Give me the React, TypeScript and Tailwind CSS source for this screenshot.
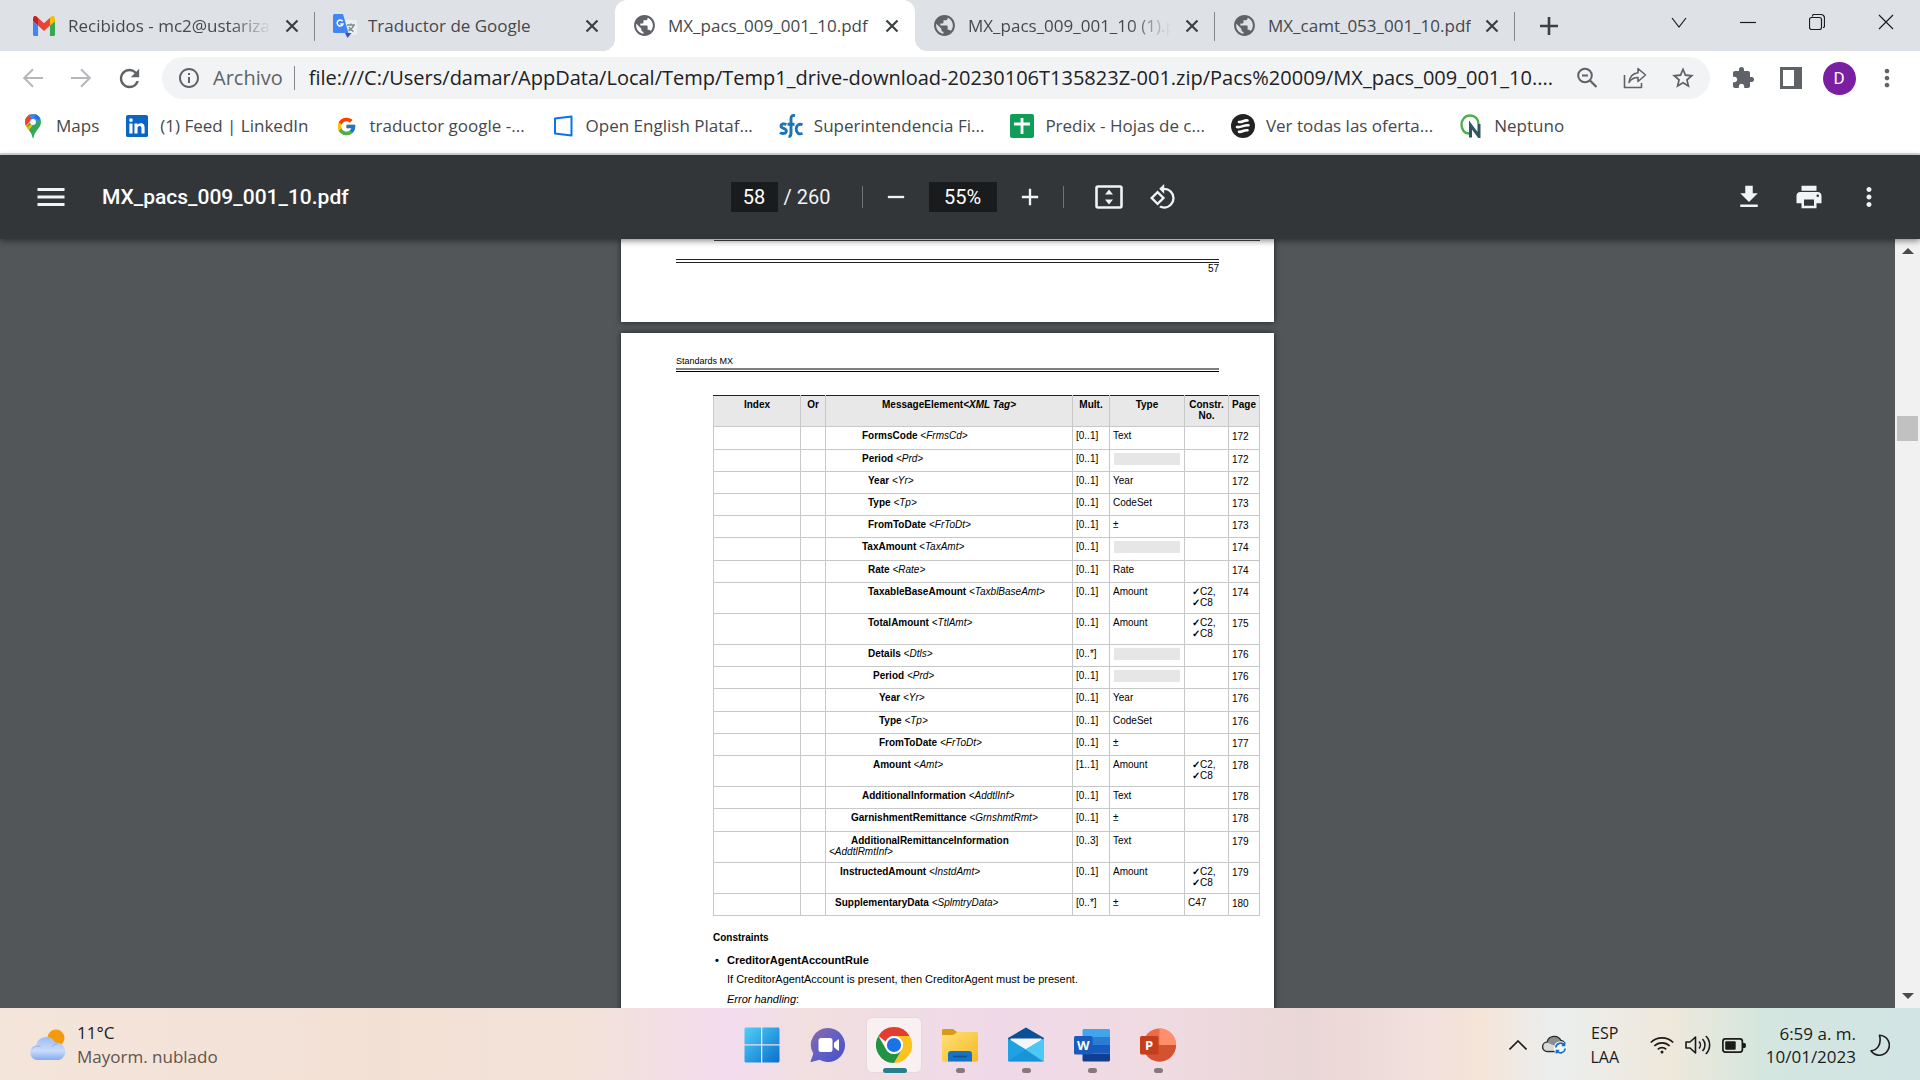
import React from 'react';
import {
  MdAdd,
  MdExtension,
  MdMenu,
  MdMoreVert,
  MdPrint,
  MdPublic,
  MdRemove,
  MdRotate90DegreesCcw,
  MdRefresh,
  MdStarBorder,
  MdInfoOutline,
} from 'react-icons/md';
import { FcGoogle } from 'react-icons/fc';

/* ---------- favicons ---------- */

const GmailIcon = () => (
  <svg viewBox="0 0 24 18" className="h-5 w-[22px]" preserveAspectRatio="none">
    <path fill="#4285f4" d="M1.6 18H5.5V8.6L0 4.5v11.9C0 17.3.7 18 1.6 18z" />
    <path fill="#34a853" d="M18.5 18h3.9c.9 0 1.6-.7 1.6-1.6V4.5l-5.5 4.1z" />
    <path fill="#fbbc04" d="M18.5 1.6v7L24 4.5V2.4c0-2-2.3-3.200-3.900-2z" />
    <path fill="#ea4335" d="M5.5 8.600v-7L12 6.500l6.500-4.900v7L12 13.500z" />
    <path fill="#c5221f" d="M0 2.400v2.100l5.500 4.100v-7L3.900.4C2.300-.8 0 .4 0 2.400z" />
  </svg>
);

const TranslateIcon = () => (
  <svg viewBox="0 0 24 24" className="h-6 w-6">
    <path fill="#eceff1" d="M9 6h13.500c.8 0 1.500.7 1.500 1.500v12c0 .8-.7 1.500-1.500 1.500H14z" />
    <path fill="none" stroke="#7d8a92" strokeWidth="1.400" d="M14 11h8M18 9.500V11M20.500 11c-.5 2.500-2.500 4.500-5 5.500M16 13c1 2 2.500 3.500 4.500 4.500" />
    <path fill="#3f51b5" d="M12 19l2.500 5 4-5z" />
    <path fill="#4285f4" d="M1.500 0H10l5.500 19h-14C.7 19 0 18.300 0 17.500v-16C0 .7.7 0 1.500 0z" />
    <path fill="none" stroke="#fff" strokeWidth="1.500" d="M9.600 7.300A3 3 0 1 0 10 10H7.300" />
  </svg>
);

const GlobeIcon = () => <MdPublic className="h-[25px] w-[25px] -ml-px text-[#5f6368]" />;

const MapsIcon = () => (
  <svg viewBox="0 0 16 24" className="h-6 w-4">
    <clipPath id="pin">
      <path d="M8 0a8 8 0 0 0-8 8c0 3 1.500 5 3.500 7.600C5.500 18.500 7 20.500 7.300 23c.1.700.3 1 .7 1s.6-.3.7-1c.3-2.500 1.800-4.500 3.800-7.400C14.500 13 16 11 16 8a8 8 0 0 0-8-8z" />
    </clipPath>
    <g clipPath="url(#pin)">
      <path fill="#34a853" d="M0 0h16v24H0z" />
      <path fill="#fbbc04" d="M-1 15.500L13 0H0v18l3.500-1.500L12 6z" />
      <path fill="#4285f4" d="M3 0h13v4L8 12 4 5z" />
      <path fill="#1a73e8" d="M11 0l5 4-3 2-4-3z" />
      <path fill="#ea4335" d="M-1 10V0h4.500L6.500 5.500 1 11.500z" />
    </g>
    <circle cx="8" cy="8" r="2.900" fill="#fff" />
  </svg>
);

const LinkedInIcon = () => (
  <svg viewBox="0 0 24 24" className="h-[22px] w-[22px]">
    <rect width="24" height="24" rx="2" fill="#0a66c2" />
    <circle cx="5.400" cy="5.500" r="2" fill="#fff" />
    <path fill="#fff" d="M3.700 9.200h3.400v11H3.700zM9.200 9.200h3.300v1.500c.6-1 1.800-1.800 3.500-1.800 3.400 0 4.300 2.200 4.300 5.200v6.100h-3.400v-5.400c0-1.600-.3-2.900-2-2.900s-2.300 1.200-2.300 2.800v5.500H9.200z" />
  </svg>
);

const OpenIcon = () => (
  <svg viewBox="0 0 20 22" className="h-[22px] w-5">
    <path fill="none" stroke="#0b72ee" strokeWidth="2" strokeLinejoin="round" d="M2 3.500L18.500 1.500v19L2 18.500z" />
  </svg>
);

const SfcIcon = () => (
  <svg viewBox="0 0 24 24" className="h-6 w-6">
    <g fill="none" stroke="#1b75b5" strokeWidth="2.900">
      <path d="M7.300 10.700C5.500 9.400 2 9.600 2 12c0 3 5.300 1.800 5.300 5 0 2.800-4.300 3.200-6.300 1.500" />
      <path d="M16 1.600c-2.800-.6-4 .4-4 3.400v14c0 2.500-.8 3.600-2.500 3.600M8.500 10.300h7" />
      <path d="M23.500 10.800c-3.500-1.600-6.300.3-6.300 4.200s2.800 6 6.300 4.200" />
    </g>
  </svg>
);

const SheetsIcon = () => (
  <svg viewBox="0 0 24 24" className="h-6 w-6">
    <rect width="24" height="24" rx="2" fill="#0f9d58" />
    <path fill="#fff" d="M10.600 4h2.800v4.600H20v2.800h-6.600V20h-2.800v-8.600H4V8.600h6.600z" />
  </svg>
);

const OfferIcon = () => (
  <svg viewBox="0 0 24 24" className="h-6 w-6">
    <circle cx="12" cy="12" r="12" fill="#232323" />
    <path fill="none" stroke="#fff" strokeWidth="2.600" strokeLinecap="round" d="M8 8c3.500.6 5-2.200 8.500-1.500M6 13c4.500.8 7-2.500 11.500-1.700M8 17.800c3.500.5 5-2.200 8.500-1.500" />
  </svg>
);

const NeptunoIcon = () => (
  <svg viewBox="0 0 24 24" className="h-6 w-6">
    <path fill="none" stroke="#4caf50" strokeWidth="2.400" d="M10 19.500C5 19.500 2.500 15 2.500 10.500S6 1.500 11 1.500s8.500 3.500 8.500 8.500" />
    <path fill="none" stroke="#2f5763" strokeWidth="3" d="M11.500 23.500V11l8.500 11.500V10" />
  </svg>
);

/* ---------- toolbar icons ---------- */

const Arrow = ({ flip }: { flip?: boolean }) => (
  <svg viewBox="0 0 22 20" className={flip ? 'h-5 w-[22px] -scale-x-100' : 'h-5 w-[22px]'}>
    <path fill="none" stroke="#b4b7bb" strokeWidth="2" d="M21 10H2.500M11 1.200L2.200 10l8.800 8.800" />
  </svg>
);

const ZoomOutIcon = () => (
  <svg viewBox="0 0 24 24" className="h-6 w-6" fill="none" stroke="#5f6368" strokeWidth="2">
    <circle cx="10" cy="9.500" r="6.800" />
    <path d="M15 14.500l6.500 6.500M7 9.500h6" strokeWidth="2.200" />
  </svg>
);

const ShareIcon = () => (
  <svg viewBox="0 0 24 24" className="h-6 w-6" fill="none" stroke="#5f6368" strokeWidth="1.600" strokeLinejoin="round">
    <path d="M1.500 9v12.500h17V17" />
    <path d="M15 2.500l7.500 6.500-7.500 6.500v-4c-4 0-7 1.500-9 5 .5-5 3.500-9 9-9.700z" />
  </svg>
);

const DownloadIcon = () => (
  <svg viewBox="0 0 24 24" className="h-[30px] w-[30px]" fill="#f1f3f4">
    <path d="M19 9h-4V3H9v6H5l7 7 7-7zM5 18v2h14v-2H5z" />
  </svg>
);

const FitIcon = () => (
  <svg viewBox="0 0 28 24" className="h-6 w-7">
    <rect x="1.500" y="1.500" width="25" height="21" rx="1.500" fill="none" stroke="#f1f3f4" strokeWidth="2.600" />
    <path fill="#f1f3f4" d="M14 4.500l4 5h-8zM14 19.500l4-5h-8z" />
  </svg>
);

/* ---------- taskbar icons ---------- */

const WindowsIcon = () => (
  <svg viewBox="0 0 36 36" className="h-9 w-9">
    <defs>
      <linearGradient id="win" x1="0" y1="0" x2="1" y2="1" gradientUnits="objectBoundingBox">
        <stop offset="0" stopColor="#4fd0f8" />
        <stop offset="1" stopColor="#0a6fcb" />
      </linearGradient>
    </defs>
    <path fill="url(#win)" d="M2 .5h15v16.800H.5V2C.5 1.200 1.200.5 2 .5zM18.300.5H34c.8 0 1.500.7 1.500 1.500v15.300H18.300zM.5 18.600H17v16.900H2c-.8 0-1.500-.7-1.500-1.500zM18.300 18.600h17.200V34c0 .8-.7 1.500-1.500 1.500H18.300z" />
  </svg>
);

const ChatIcon = () => (
  <svg viewBox="0 0 36 36" className="h-9 w-9">
    <defs>
      <linearGradient id="chat" x1="0" y1="0" x2="1" y2="1">
        <stop offset="0" stopColor="#8c6aa8" />
        <stop offset=".6" stopColor="#5a5cc9" />
        <stop offset="1" stopColor="#4a4fc0" />
      </linearGradient>
    </defs>
    <path fill="url(#chat)" d="M18 1a17 17 0 1 1-8.500 31.700L1.500 35c-.6.100-1-.3-.8-.9l2.600-7.400A17 17 0 0 1 18 1z" />
    <rect x="8.500" y="11" width="14" height="14" rx="2.500" fill="#fff" />
    <path fill="#fff" d="M24 15.800l4-3.300c.6-.4 1 0 1 .5v10c0 .6-.5.900-1 .5l-4-3.300z" />
  </svg>
);

const ChromeIcon = () => (
  <svg viewBox="0 0 36 36" className="h-9 w-9">
    <path fill="#e33b2e" d="M18 0a18 18 0 0 1 15.600 9H18a9 9 0 0 0-8.300 5.500L2.400 9A18 18 0 0 1 18 0z" />
    <path fill="#fcc31e" d="M33.600 9A18 18 0 0 1 18 36l7.800-13.500A9 9 0 0 0 18 9z" />
    <path fill="#229342" d="M18 36A18 18 0 0 1 2.400 9l7.800 13.500A9 9 0 0 0 25.800 22.500z" />
    <circle cx="18" cy="18" r="9" fill="#fff" />
    <circle cx="18" cy="18" r="7.100" fill="#1a73e8" />
  </svg>
);

const FolderIcon = () => (
  <svg viewBox="0 0 36 36" className="h-9 w-9">
    <defs>
      <linearGradient id="fold" x1="0" y1="0" x2="1" y2="1">
        <stop offset="0" stopColor="#ffe07a" />
        <stop offset="1" stopColor="#f5b921" />
      </linearGradient>
    </defs>
    <path fill="#d79c14" d="M1.500 2H11l4 3v4H0V3.500C0 2.600.7 2 1.500 2z" />
    <path fill="url(#fold)" d="M0 8h11l4.500-3h19c.8 0 1.500.7 1.500 1.500V33c0 .8-.7 1.500-1.500 1.500h-33C.7 34.500 0 33.800 0 33z" />
    <path fill="#1573c4" d="M6 34.500V27a3 3 0 0 1 3-3h18a3 3 0 0 1 3 3v7.500z" />
    <path stroke="#0b4f91" strokeWidth="1.500" d="M11 29.500h14" />
  </svg>
);

const MailIcon = () => (
  <svg viewBox="0 0 36 36" className="h-9 w-9">
    <path fill="#0b4f96" d="M18 .5L36 11v4H0v-4z" />
    <path fill="#f4f6f8" d="M2.500 11.500h31V23h-31z" />
    <path fill="#1fa2e4" d="M0 11.500l18 11 18-11V33c0 .8-.7 1.500-1.500 1.500h-33C.7 34.500 0 33.800 0 33z" />
    <path fill="#4cc8f5" d="M36 11.500L17 22.500l18 12c.6-.2 1-.8 1-1.500z" />
    <path fill="#1688d2" d="M0 34l17.500-11.500L35.500 34.500h-34C.9 34.500.3 34.400 0 34z" opacity=".6" />
  </svg>
);

const WordIcon = () => (
  <svg viewBox="0 0 36 36" className="h-9 w-9">
    <path fill="#41a5ee" d="M10 2h24.500c.8 0 1.500.7 1.500 1.500V10H8.500V3.500C8.500 2.700 9.200 2 10 2z" />
    <path fill="#2b7cd3" d="M8.500 10H36v8H8.500z" />
    <path fill="#185abd" d="M8.500 18H36v8.500H8.500z" />
    <path fill="#103f91" d="M8.500 26.500H36V33c0 .8-.7 1.500-1.500 1.500H10c-.8 0-1.500-.7-1.500-1.500z" />
    <rect y="9" width="18.500" height="18.500" rx="1.500" fill="#185abd" />
    <text x="9.200" y="23" textAnchor="middle" fontFamily="Open Sans, sans-serif" fontWeight="700" fontSize="13" fill="#fff">W</text>
  </svg>
);

const PowerPointIcon = () => (
  <svg viewBox="0 0 36 36" className="h-9 w-9">
    <circle cx="19.500" cy="18" r="16.500" fill="#ed6c47" />
    <path fill="#ff8f6b" d="M19.500 1.500A16.500 16.500 0 0 1 36 18H19.500z" />
    <path fill="#d35230" d="M36 18a16.500 16.500 0 0 1-33 0z" />
    <rect y="9" width="18.500" height="18.500" rx="1.500" fill="#c43e1c" />
    <text x="9.200" y="23" textAnchor="middle" fontFamily="Open Sans, sans-serif" fontWeight="700" fontSize="13" fill="#fff">P</text>
  </svg>
);

const WeatherIcon = () => (
  <svg viewBox="0 0 36 32" className="h-8 w-9">
    <defs>
      <linearGradient id="cloud" x1="0" y1="0" x2="0" y2="1">
        <stop offset="0" stopColor="#9dbdf3" />
        <stop offset=".6" stopColor="#c9dcfb" />
        <stop offset="1" stopColor="#86aaf0" />
      </linearGradient>
    </defs>
    <circle cx="26" cy="9" r="8.500" fill="#f59a0f" />
    <path fill="url(#cloud)" d="M7 31a7 7 0 0 1-.8-13.900A10 10 0 0 1 25 13.500a9 9 0 0 1 4 17.500z" />
    <path fill="none" stroke="#8fb0ee" d="M1.500 20a8 8 0 0 1 9-2.500M22 18c1-2.500 4-3.500 6-3" />
  </svg>
);

/* ---------- data ---------- */

const tabs = [
  { title: 'Recibidos - mc2@ustariza', Icon: GmailIcon, active: false, fade: true, divider: true },
  { title: 'Traductor de Google', Icon: TranslateIcon, active: false, fade: false, divider: false },
  { title: 'MX_pacs_009_001_10.pdf', Icon: GlobeIcon, active: true, fade: false, divider: false },
  { title: 'MX_pacs_009_001_10 (1).pdf', Icon: GlobeIcon, active: false, fade: true, divider: true },
  { title: 'MX_camt_053_001_10.pdf', Icon: GlobeIcon, active: false, fade: false, divider: true },
];

const bookmarks = [
  { label: 'Maps', Icon: MapsIcon },
  { label: '(1) Feed | LinkedIn', Icon: LinkedInIcon },
  { label: 'traductor google -...', Icon: () => <FcGoogle className="h-[21px] w-[21px]" /> },
  { label: 'Open English Plataf...', Icon: OpenIcon },
  { label: 'Superintendencia Fi...', Icon: SfcIcon },
  { label: 'Predix - Hojas de c...', Icon: SheetsIcon },
  { label: 'Ver todas las oferta...', Icon: OfferIcon },
  { label: 'Neptuno', Icon: NeptunoIcon },
];

const in1 = 'indent-[6px]';
const in2 = 'indent-[11px]';
const in4 = 'indent-[22px]';
const in6 = 'indent-[33px]';
const in7 = 'indent-[39px]';
const in8 = 'indent-[44px]';
const in9 = 'indent-[50px]';
const h22 = 'h-[22px]';
const h23 = 'h-[23px]';
const h31 = 'h-[31px]';

type Row = [string, string, string, string, string, string, string, string];
const rows: Row[] = [
  [h23, in6, 'FormsCode', 'FrmsCd', '[0..1]', 'Text', '', '172'],
  [h22, in6, 'Period', 'Prd', '[0..1]', '#', '', '172'],
  [h22, in7, 'Year', 'Yr', '[0..1]', 'Year', '', '172'],
  [h22, in7, 'Type', 'Tp', '[0..1]', 'CodeSet', '', '173'],
  [h22, in7, 'FromToDate', 'FrToDt', '[0..1]', '±', '', '173'],
  [h23, in6, 'TaxAmount', 'TaxAmt', '[0..1]', '#', '', '174'],
  [h22, in7, 'Rate', 'Rate', '[0..1]', 'Rate', '', '174'],
  [h31, in7, 'TaxableBaseAmount', 'TaxblBaseAmt', '[0..1]', 'Amount', '✓', '174'],
  [h31, in7, 'TotalAmount', 'TtlAmt', '[0..1]', 'Amount', '✓', '175'],
  [h22, in7, 'Details', 'Dtls', '[0..*]', '#', '', '176'],
  [h22, in8, 'Period', 'Prd', '[0..1]', '#', '', '176'],
  [h23, in9, 'Year', 'Yr', '[0..1]', 'Year', '', '176'],
  [h22, in9, 'Type', 'Tp', '[0..1]', 'CodeSet', '', '176'],
  [h22, in9, 'FromToDate', 'FrToDt', '[0..1]', '±', '', '177'],
  [h31, in8, 'Amount', 'Amt', '[1..1]', 'Amount', '✓', '178'],
  [h22, in6, 'AdditionalInformation', 'AddtlInf', '[0..1]', 'Text', '', '178'],
  [h23, in4, 'GarnishmentRemittance', 'GrnshmtRmt', '[0..1]', '±', '', '178'],
  [h31, in4, 'AdditionalRemittanceInformation', 'AddtlRmtInf', '[0..3]', 'Text', '', '179'],
  [h31, in2, 'InstructedAmount', 'InstdAmt', '[0..1]', 'Amount', '✓', '179'],
  [h22, in1, 'SupplementaryData', 'SplmtryData', '[0..*]', '±', 'C47', '180'],
];

const taskApps = [
  { name: 'Inicio', Icon: WindowsIcon, state: 'none' },
  { name: 'Chat', Icon: ChatIcon, state: 'none' },
  { name: 'Google Chrome', Icon: ChromeIcon, state: 'active' },
  { name: 'Explorador de archivos', Icon: FolderIcon, state: 'open' },
  { name: 'Correo', Icon: MailIcon, state: 'open' },
  { name: 'Word', Icon: WordIcon, state: 'open' },
  { name: 'PowerPoint', Icon: PowerPointIcon, state: 'open' },
];

/* ---------- sections ---------- */

function TabStrip() {
  return (
    <div className="flex h-[51px] shrink-0 bg-[#dee1e6] pl-[15px]">
      <div role="tablist" className="flex min-w-0">
        {tabs.map(({ title, Icon, active, fade, divider }) => (
          <div
            key={title}
            role="tab"
            aria-selected={active}
            className={
              active
                ? 'relative flex w-[300px] min-w-0 items-center rounded-t-xl bg-white pr-[14px] pl-[18px]'
                : 'relative flex w-[300px] min-w-0 items-center pr-[14px] pl-[18px]'
            }
          >
            {active && (
              <>
                <span className="absolute bottom-0 -left-3 size-3 bg-[radial-gradient(circle_at_0_0,#dee1e6_12px,white_12px)]" />
                <span className="absolute -right-3 bottom-0 size-3 bg-[radial-gradient(circle_at_100%_0,#dee1e6_12px,white_12px)]" />
              </>
            )}
            <span className="flex w-[35px] shrink-0 items-center">
              <Icon />
            </span>
            <span
              className={
                fade
                  ? 'min-w-0 flex-1 overflow-hidden text-[17px] leading-6 whitespace-nowrap text-[#45484c] [mask-image:linear-gradient(to_right,black_80%,transparent)]'
                  : 'min-w-0 flex-1 overflow-hidden text-[17px] leading-6 whitespace-nowrap text-[#45484c]'
              }
            >
              {title}
            </span>
            <button aria-label="Cerrar pestaña" className="ml-3 flex size-[18px] shrink-0 items-center justify-center">
              <svg viewBox="0 0 14 14" className="size-[14px]">
                <path stroke="#3c4043" strokeWidth="2.200" d="M1.500 1.500l11 11M12.500 1.500l-11 11" />
              </svg>
            </button>
            {divider && <span className="absolute top-3 right-0 h-[29px] w-px bg-[#85888d]" />}
          </div>
        ))}
      </div>
      <button aria-label="Nueva pestaña" className="ml-4 flex w-9 items-center justify-center">
        <svg viewBox="0 0 18 18" className="size-[18px]">
          <path stroke="#3c4043" strokeWidth="2.600" d="M9 0v18M0 9h18" />
        </svg>
      </button>
      <div className="ml-auto flex h-[43px]">
        {[
          ['Buscar pestañas', 'M1 4l7 9 7-9'],
          ['Minimizar', 'M0 8.500h16'],
          ['Restaurar', 'M3.500 2.500v-.500a1.500 1.500 0 0 1 1.500-1.500h7a3.500 3.500 0 0 1 3.500 3.500v8a1.500 1.500 0 0 1-1.500 1.500M2 3.500h8.500a2 2 0 0 1 2 2v8a2 2 0 0 1-2 2H2.500a2 2 0 0 1-2-2v-8a2 2 0 0 1 2-2'],
          ['Cerrar', 'M1 1l14 14M15 1L1 15'],
        ].map(([label, d]) => (
          <button key={label} aria-label={label} className="flex w-[69px] items-center justify-center">
            <svg viewBox="0 0 16 16" className="size-4">
              <path fill="none" stroke="#1c1d1f" strokeWidth="1.200" d={d} />
            </svg>
          </button>
        ))}
      </div>
    </div>
  );
}

const navBtn = 'flex h-full w-12 shrink-0 items-center justify-center text-[#5f6368]';

function AddressRow() {
  return (
    <div className="flex h-[54px] shrink-0 items-center px-[9px]">
      <button aria-label="Atrás" className={navBtn}><Arrow /></button>
      <button aria-label="Adelante" className={navBtn}><Arrow flip /></button>
      <button aria-label="Volver a cargar" className={navBtn}><MdRefresh className="size-[29px]" /></button>
      <div className="mx-[9px] flex h-[42px] min-w-0 flex-1 items-center rounded-full bg-[#f1f3f4] pr-[3px] pl-[15px]">
        <MdInfoOutline className="size-6 shrink-0 text-[#5f6368]" />
        <label htmlFor="url" className="ml-3 text-[20px] leading-7 text-[#5f6368]">Archivo</label>
        <span className="mr-[14px] ml-[11px] h-6 w-px shrink-0 bg-[#80868b]" />
        <input
          id="url"
          readOnly
          value="file:///C:/Users/damar/AppData/Local/Temp/Temp1_drive-download-20230106T135823Z-001.zip/Pacs%20009/MX_pacs_009_001_10...."
          className="min-w-0 flex-1 bg-transparent text-[20px] leading-7 text-[#202124] outline-none"
        />
        <button aria-label="Zoom" className={navBtn}><ZoomOutIcon /></button>
        <button aria-label="Compartir" className={navBtn}><ShareIcon /></button>
        <button aria-label="Añadir a marcadores" className={navBtn}><MdStarBorder className="size-[26px]" /></button>
      </div>
      <button aria-label="Extensiones" className={navBtn}><MdExtension className="size-6" /></button>
      <button aria-label="Panel lateral" className={navBtn}>
        <svg viewBox="0 0 22 22" className="size-[22px]">
          <path fill="#5f6368" fillRule="evenodd" d="M0 0h22v22H0zM3 3v16h11V3z" />
        </svg>
      </button>
      <button aria-label="Perfil" className={navBtn}>
        <span className="flex size-[33px] items-center justify-center rounded-full bg-[#7b1fa2] font-[Roboto,sans-serif] text-[17px] leading-none text-white">D</span>
      </button>
      <button aria-label="Menú" className={navBtn}><MdMoreVert className="size-7" /></button>
    </div>
  );
}

function Bookmarks() {
  return (
    <nav className="flex h-[50px] shrink-0 items-start gap-[26px] border-b-2 border-[#d7dadd] pt-[9px] pl-[21px]">
      {bookmarks.map(({ label, Icon }) => (
        <a key={label} href="#" className="flex items-center text-[17px] leading-6 whitespace-nowrap text-[#45484c]">
          <span className="mr-[11px] flex w-6 justify-center"><Icon /></span>
          {label}
        </a>
      ))}
    </nav>
  );
}

const pdfBtn = 'flex h-12 w-[54px] shrink-0 items-center justify-center';

function PdfToolbar() {
  return (
    <div className="relative z-10 flex h-[84px] shrink-0 items-center bg-[#323639] font-[Roboto,sans-serif] text-[#f1f3f4] shadow-[0_2px_6px_rgba(0,0,0,0.45)]">
      <div className="flex flex-1 items-center">
        <button aria-label="Menú" className="mx-[33px]"><MdMenu className="h-9 w-9" /></button>
        <span className="text-[21px] leading-7 font-medium text-white">MX_pacs_009_001_10.pdf</span>
      </div>
      <div className="flex items-center">
        <input aria-label="Página" defaultValue="58" className="h-[30px] w-[47px] bg-[#191b1c] text-center text-[20px] leading-7 text-white outline-none" />
        <span className="w-[78px] pl-[6px] text-[20px] leading-7 whitespace-nowrap">/ 260</span>
        <span className="mx-[6px] h-[22px] w-px bg-[#707376]" />
        <button aria-label="Alejar" className={pdfBtn}><MdRemove className="size-7" /></button>
        <input aria-label="Nivel de zoom" defaultValue="55%" className="mx-[6px] h-[30px] w-[68px] bg-[#191b1c] text-center text-[20px] leading-7 text-white outline-none" />
        <button aria-label="Acercar" className={pdfBtn}><MdAdd className="size-7" /></button>
        <span className="mr-[18px] ml-[6px] h-[22px] w-px bg-[#707376]" />
        <button aria-label="Ajustar a la página" className={pdfBtn}><FitIcon /></button>
        <button aria-label="Girar" className={pdfBtn}><MdRotate90DegreesCcw className="size-7" /></button>
      </div>
      <div className="flex flex-1 justify-end">
        <button aria-label="Descargar" className="flex h-12 w-[60px] items-center justify-center"><DownloadIcon /></button>
        <button aria-label="Imprimir" className="flex h-12 w-[60px] items-center justify-center"><MdPrint className="size-[30px]" /></button>
        <button aria-label="Más acciones" className="mr-[21px] flex h-12 w-[60px] items-center justify-center"><MdMoreVert className="size-[30px]" /></button>
      </div>
    </div>
  );
}

const cell = 'border border-[#c6c8ca] px-[3px] pt-[3px] text-left align-top font-normal';
const head = 'border border-[#c6c8ca] border-t-[#222] pt-[3px] text-center align-top font-bold';

function MessageTable() {
  return (
    <table className="ml-[92px] w-[546px] table-fixed border-collapse border-y border-y-[#444]">
      <colgroup>
        <col className="w-[87px]" />
        <col className="w-[25px]" />
        <col className="w-[247px]" />
        <col className="w-[37px]" />
        <col className="w-[75px]" />
        <col className="w-[44px]" />
        <col className="w-[31px]" />
      </colgroup>
      <thead>
        <tr className="h-[31px] bg-[#e8e8e8]">
          <th className={head}>Index</th>
          <th className={head}>Or</th>
          <th className={head}>MessageElement<i>&lt;XML Tag&gt;</i></th>
          <th className={head}>Mult.</th>
          <th className={head}>Type</th>
          <th className={head}>Constr. No.</th>
          <th className={head}>Page</th>
        </tr>
      </thead>
      <tbody>
        {rows.map(([height, indent, name, tag, mult, type, constraint, page], i) => (
          <tr key={i} className={height}>
            <td className={cell} />
            <td className={cell} />
            <td className={cell}>
              <div className={indent}>
                <b>{name}</b> <i>&lt;{tag}&gt;</i>
              </div>
            </td>
            <td className={cell}>{mult}</td>
            <td className={cell}>
              {type === '#' ? <div className="ml-px h-3 w-[66px] bg-[#e6e6e6]" /> : type}
            </td>
            <td className={cell}>
              {constraint === '✓' ? (
                <div className="pl-1">
                  <b>✓</b>C2,
                  <br />
                  <b>✓</b>C8
                </div>
              ) : (
                constraint
              )}
            </td>
            <td className="border border-[#c6c8ca] px-[3px] pt-1 text-left align-top">{page}</td>
          </tr>
        ))}
      </tbody>
    </table>
  );
}

function Viewer() {
  return (
    <div className="flex min-h-0 flex-1 bg-[#525659]">
      <main className="flex min-w-0 flex-1 flex-col items-center gap-[11px] overflow-hidden font-['Liberation_Sans',Arial,sans-serif] text-[10px] leading-[11px] text-black">
        <section className="h-[83px] w-[653px] shrink-0 bg-white pr-[55px] pl-[55px] shadow-[0_0_6px_rgba(0,0,0,0.6)]">
          <div className="ml-[38px] h-[2px] w-[546px] border-b border-[#444]" />
          <div className="mt-[18px] h-1 border-y border-[#222]" />
          <p className="text-right">57</p>
        </section>
        <section className="w-[653px] shrink-0 bg-white shadow-[0_0_6px_rgba(0,0,0,0.6)]">
          <header className="mx-[55px] border-b border-black pt-[23px]">
            <p className="text-[9px] leading-[10px]">Standards MX</p>
            <div className="mt-[2px] mb-px h-[2px] bg-[#808080]" />
          </header>
          <div className="h-[23px]" />
          <MessageTable />
          <div className="ml-[92px] pt-4">
            <h2 className="font-bold">Constraints</h2>
            <ul className="mt-[11px] text-[11px] leading-[13px]">
              <li>
                <h3 className="flex font-bold"><span className="w-[14px] pl-[2px]">•</span>CreditorAgentAccountRule</h3>
                <p className="mt-[6px] ml-[14px]">If CreditorAgentAccount is present, then CreditorAgent must be present.</p>
                <p className="mt-[7px] ml-[14px] pb-5"><i>Error handling</i>:</p>
              </li>
            </ul>
          </div>
        </section>
      </main>
      <div className="flex w-[25px] shrink-0 flex-col items-center bg-[#f1f1f1] py-[9px]">
        <svg viewBox="0 0 12 6" className="h-[6px] w-3"><path fill="#4a4a4a" d="M0 6l6-6 6 6z" /></svg>
        <div className="mt-[162px] h-[25px] w-[21px] bg-[#c1c1c1]" />
        <svg viewBox="0 0 12 6" className="mt-auto h-[6px] w-3"><path fill="#4a4a4a" d="M0 0l6 6 6-6z" /></svg>
      </div>
    </div>
  );
}

function Taskbar() {
  return (
    <footer className="relative z-10 flex h-[72px] shrink-0 items-center bg-[linear-gradient(90deg,#f4e5da_0%,#f2e0d5_20%,#f2e2d8_30%,#f2dcee_38%,#f1dfe0_42%,#efd9e8_52%,#efdbe2_60%,#e9d6d6_68%,#f1e0dc_74%,#f5e4d8_77%,#ebeeee_81%,#efe8db_87%,#d3e6df_92%,#d2e4e4_100%)] pt-[2px] text-[17px] text-[#1b1b1b]">
      <div className="flex min-w-0 flex-1">
        <button className="ml-[30px] flex items-center text-left">
          <WeatherIcon />
          <span className="ml-[11px] leading-6">
            <span className="block">11°C</span>
            <span className="block text-[#5d564f]">Mayorm. nublado</span>
          </span>
        </button>
      </div>
      <div className="flex gap-[10px]">
        {taskApps.map(({ name, Icon, state }) => (
          <button
            key={name}
            aria-label={name}
            className={
              state === 'active'
                ? 'relative flex size-14 items-center justify-center rounded-md border border-[#e6d8dd] bg-[#f9f0f2]'
                : 'relative flex size-14 items-center justify-center'
            }
          >
            <Icon />
            {state === 'active' && <span className="absolute -bottom-px left-4 h-[5px] w-6 rounded-full bg-[#27808a]" />}
            {state === 'open' && <span className="absolute bottom-0 left-6 h-[5px] w-[9px] rounded-full bg-[#85797d]" />}
          </button>
        ))}
      </div>
      <div className="flex min-w-0 flex-1 items-center justify-end">
        <button aria-label="Iconos ocultos" className="mr-[15px]">
          <svg viewBox="0 0 18 10" className="h-[10px] w-[18px]"><path fill="none" stroke="#1b1b1b" strokeWidth="1.600" d="M.5 9.500L9 1l8.500 8.500" /></svg>
        </button>
        <button aria-label="OneDrive">
          <svg viewBox="0 0 26 20" className="h-5 w-[26px]">
            <path fill="#8b8d8f" stroke="#2a2a2a" strokeWidth="1.300" d="M5.500 16.500a4.700 4.700 0 0 1-.5-9.400A7.500 7.500 0 0 1 19 5.500a5.200 5.200 0 0 1 4.500 5.500c0 3-2 5.500-5 5.500z" />
            <path fill="#d9dadb" d="M5.500 15.800a4 4 0 0 1 0-8L16 12v3.800z" />
            <circle cx="18.500" cy="13" r="6.800" fill="#f4f7f8" />
            <path fill="none" stroke="#1d6fc4" strokeWidth="1.700" d="M13.800 12.500a4.800 4.800 0 0 1 8.500-2.500M23.200 13.500a4.800 4.800 0 0 1-8.500 2.500M22.500 7.500V10.300H19.800M14.500 18.500v-2.800h2.700" />
          </svg>
        </button>
        <button className="ml-[20px] w-[34px] text-center text-[16px] leading-6">ESP<br />LAA</button>
        <button aria-label="Red, volumen y batería" className="ml-7 flex items-center gap-[11px]">
          <svg viewBox="0 0 24 18" className="h-[18px] w-6" fill="none" stroke="#1b1b1b" strokeWidth="1.700">
            <path d="M.8 6.500a16 16 0 0 1 22.400 0M4.300 10a11 11 0 0 1 15.400 0M7.800 13.300a6.200 6.200 0 0 1 8.400 0" />
            <circle cx="12" cy="16" r="1.500" fill="#1b1b1b" stroke="none" />
          </svg>
          <svg viewBox="0 0 26 20" className="h-5 w-[26px]" fill="none" stroke="#1b1b1b" strokeWidth="1.600">
            <path strokeLinejoin="round" d="M1 7h4l5.500-5v16L5 13H1zM14 6.500a5 5 0 0 1 0 7M17.500 4a8.500 8.500 0 0 1 0 12M20.800 1a12.500 12.500 0 0 1 0 18" />
          </svg>
          <svg viewBox="0 0 24 15" className="h-[15px] w-6">
            <rect x=".9" y=".9" width="19.500" height="13.200" rx="2.500" fill="none" stroke="#1b1b1b" strokeWidth="1.700" />
            <rect x="3.200" y="3.200" width="10.500" height="8.600" rx="1" fill="#1b1b1b" />
            <path fill="#1b1b1b" d="M21 5h1.500c.8 0 1.500.8 1.500 2.500S23.300 10 22.500 10H21z" />
          </svg>
        </button>
        <button className="ml-5 text-right text-[17px] leading-[23px]">6:59 a. m.<br />10/01/2023</button>
        <button aria-label="Notificaciones" className="mr-[30px] ml-[14px]">
          <svg viewBox="0 0 20 22" className="h-[22px] w-5">
            <path fill="none" stroke="#1b1b1b" strokeWidth="1.600" strokeLinejoin="round" d="M9.500 1.200A10 10 0 1 1 1 16.800c5.500-.3 11-5.500 8.500-15.600z" />
          </svg>
        </button>
      </div>
    </footer>
  );
}

export default function App() {
  return (
    <div className="flex h-screen flex-col overflow-hidden bg-white font-['Open_Sans','Noto_Sans',sans-serif]">
      <TabStrip />
      <AddressRow />
      <Bookmarks />
      <PdfToolbar />
      <Viewer />
      <Taskbar />
    </div>
  );
}
